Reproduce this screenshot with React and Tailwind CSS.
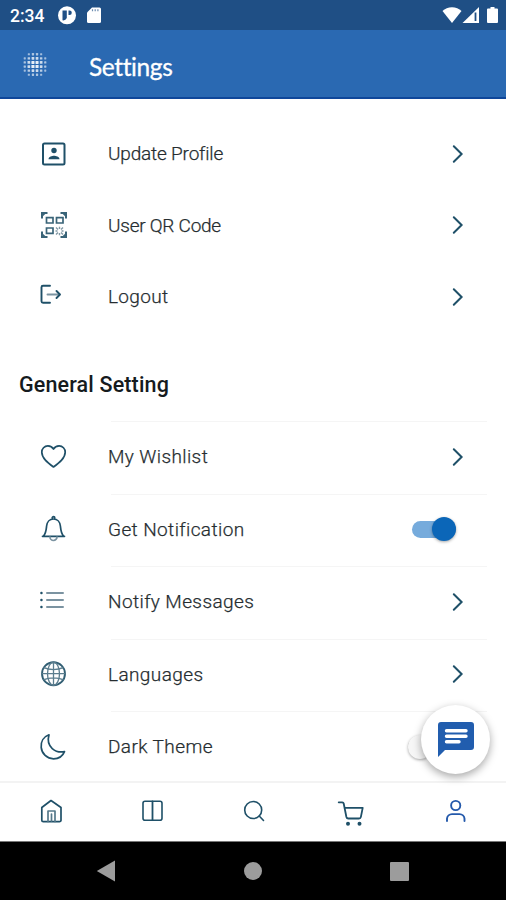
import { useState } from 'react';

const INK = '#1f5068';
const INK_SOFT = '#7b93a1';

function Glyph({ children, color = INK, size = 30, width = 1.7 }) {
  return (
    <svg
      width={size}
      height={size}
      viewBox={`0 0 ${size} ${size}`}
      fill="none"
      stroke={color}
      strokeWidth={width}
      strokeLinecap="round"
      strokeLinejoin="round"
      className="block shrink-0 overflow-visible"
    >
      {children}
    </svg>
  );
}

const ProfileIcon = () => (
  <Glyph width={2}>
    <rect x="4" y="4.5" width="21.5" height="21" rx="1.5" />
    <g fill={INK} stroke="none">
      <circle cx="15" cy="11.5" r="2.7" />
      <path d="M9.500 20.300c0-2.600 3.700-3.500 5.500-3.500s5.500.9 5.500 3.500z" />
    </g>
  </Glyph>
);

const QrIcon = () => (
  <Glyph width={1.7} color="#3a6478">
    <g strokeLinecap="butt" strokeLinejoin="miter">
      <path d="M3 8.500V3h5.500M21.500 3H27v5.500M27 21.500V27h-5.500M8.500 27H3v-5.500" strokeWidth="2" />
      <path d="M3 24v3h3zM24 27h3v-3zM3 6V3h3zM24 3h3v3z" />
      <path d="M7.500 7.700h6.500v5.300H7.500zM17.500 7.700H24v5.300h-6.500zM7.500 18H14v5.300H7.500z" />
      <path d="m17 17.500 2 2M20.500 16.800v2.200M24 17.500l-2 2M16.500 21h2M22.500 21h2M17 24.500l2-2M20.500 23v2.200M24 24.500l-2-2" stroke="#8299a5" strokeWidth="1.400" />
    </g>
  </Glyph>
);

const LogoutIcon = () => (
  <Glyph width={1.900}>
    <path d="M11 3.800H4A1.500 1.500 0 0 0 2.500 5.300v13.900A1.500 1.500 0 0 0 4 20.700h7" />
    <path d="M8.500 12.500H20" stroke={INK_SOFT} />
    <path d="m17.500 9 3.500 3.500-3.500 3.500" />
  </Glyph>
);

const HeartIcon = () => (
  <Glyph>
    <path d="M14.500 25C8.500 20.500 2.800 16 2.800 10.200a6.100 6.100 0 0 1 6.100-6.300c2.500 0 4.500 1.300 5.600 3.200 1.100-1.900 3.100-3.200 5.600-3.200a6.100 6.100 0 0 1 6.100 6.300c0 5.800-5.700 10.300-11.700 14.800z" />
  </Glyph>
);

const BellIcon = () => (
  <Glyph>
    <path d="M3.500 22.300h22M4.500 22c2.600-3 2.700-6 3.100-10 .4-4 3-7 6.900-7s6.500 3 6.900 7c.4 4 .5 7 3.100 10M13.200 4a1.300 1.300 0 0 1 2.600 0" />
    <path d="M11 23a3.500 3.500 0 0 0 7 0" stroke={INK_SOFT} />
  </Glyph>
);

const ListIcon = () => (
  <Glyph>
    <path d="M8 6h16M8 13h16M8 20h16" stroke={INK_SOFT} strokeWidth="2" />
    <path d="M2.400 6h.1M2.400 13h.1M2.400 20h.1" strokeWidth="2.400" />
  </Glyph>
);

const GlobeIcon = () => (
  <Glyph width={1.300} color="#5b7d8e">
    <circle cx="14.500" cy="14.700" r="11.500" strokeWidth="1.900" stroke="#315e73" />
    <ellipse cx="14.500" cy="14.700" rx="6" ry="11.500" />
    <path d="M14.500 3.200v23M3 14.700h23M5 8.700c5 2.500 14 2.500 19 0M5 20.700c5-2.500 14-2.500 19 0" />
  </Glyph>
);

const MoonIcon = () => (
  <Glyph>
    <path d="M10 2.800C4.500 4.800 1.700 9.800 2.200 15.300 2.800 21.800 8 26.800 14.500 26.800c4.800 0 9.200-2.800 11-7.200-8.500 1.700-19-4.300-15.500-16.800z" />
  </Glyph>
);

const HomeIcon = ({ color }) => (
  <Glyph color={color}>
    <path d="M5.800 10.500 15 3.500l10 7v12.700a1.500 1.500 0 0 1-1.500 1.500H7.300a1.500 1.500 0 0 1-1.500-1.500z" />
    <path d="M12 24.500V14h7v10.500M15.500 17v7" stroke="#56798a" />
  </Glyph>
);

const ColumnsIcon = ({ color }) => (
  <Glyph color={color} width={1.600}>
    <rect x="6" y="4.200" width="19" height="19" rx="2" />
    <path d="M15.500 4.500v18.500" strokeWidth="1.800" />
  </Glyph>
);

const SearchIcon = ({ color }) => (
  <Glyph color={color} width={1.600}>
    <circle cx="15.200" cy="13" r="8.500" />
    <path d="m21.200 19 4.300 4.500" />
  </Glyph>
);

const CartIcon = ({ color }) => (
  <Glyph color={color} width={1.800}>
    <path d="M-.3 5.300h3.500a1.500 1.500 0 0 1 1.500 1.200l2.700 13.500a2 2 0 0 0 2 1.500h10.500a2 2 0 0 0 2-1.600l1.800-9H5.500" />
    <circle cx="9" cy="26.700" r="1.100" fill={color} />
    <circle cx="20.500" cy="26.700" r="1.100" fill={color} />
  </Glyph>
);

const UserIcon = ({ color }) => (
  <Glyph color={color} width={1.900}>
    <circle cx="15.700" cy="8.500" r="4.600" />
    <path d="M7 24v-2.300a5 5 0 0 1 5-4.600h7.500a5 5 0 0 1 5 4.600V24" />
  </Glyph>
);

const Chevron = () => (
  <svg width="12" height="20" viewBox="0 0 12 20" fill="none" stroke={INK} strokeWidth="2" strokeLinecap="round" className="mr-[42px] block">
    <path d="m1.800 2.200 7.800 7.800-7.800 7.800" />
  </svg>
);

const accountItems = [
  { label: 'Update Profile', icon: ProfileIcon, tracking: 'tracking-[-0.18px]' },
  { label: 'User QR Code', icon: QrIcon, tracking: 'tracking-[-0.25px]' },
  { label: 'Logout', icon: LogoutIcon, tracking: 'tracking-[0.35px]' },
];

const generalItems = [
  { label: 'My Wishlist', icon: HeartIcon },
  { label: 'Get Notification', icon: BellIcon, toggle: 'notify' },
  { label: 'Notify Messages', icon: ListIcon },
  { label: 'Languages', icon: GlobeIcon },
  { label: 'Dark Theme', icon: MoonIcon, toggle: 'dark' },
];

const tabs = [HomeIcon, ColumnsIcon, SearchIcon, CartIcon, UserIcon];

function Toggle({ on, onClick }) {
  return (
    <button
      onClick={onClick}
      className={`mr-[50px] flex h-6 items-center ${on ? 'w-[44px] justify-end' : 'w-[48px] justify-start'}`}
    >
      <span className={`flex h-[17px] w-full items-center rounded-full ${on ? 'justify-end bg-[#76abdc]' : 'justify-start bg-[#c8c8c8]'}`}>
        <span className={`size-[24px] shrink-0 rounded-full shadow-[0_1px_3px_rgba(0,0,0,0.35)] ${on ? 'bg-[#0b66b8]' : 'bg-[#f6f6f6]'}`} />
      </span>
    </button>
  );
}

function Row({ item, children }) {
  const Icon = item.icon;
  return (
    <>
      <div className="flex w-[108px] pl-[39px]">
        <Icon />
      </div>
      <span className={`flex-1 pt-px text-[19px] font-light leading-6 text-[#262d30] [-webkit-text-stroke:0.25px_#262d30] ${item.tracking || 'tracking-[0.4px]'}`}>
        {item.label}
      </span>
      {children || <Chevron />}
    </>
  );
}

function StatusBar() {
  return (
    <div className="flex h-[30px] shrink-0 items-center bg-[#1f4f85] pl-[10px] pr-[8px] text-white">
      <span className="w-[47px] pt-[3px] text-[17.5px] font-medium leading-none">2:34</span>
      <svg width="20" height="20" viewBox="0 0 20 20" className="block">
        <circle cx="10" cy="10.300" r="9" fill="#fff" />
        <path d="M5.500 5.500h4.300v7.500a4 4 0 0 1-4.300 2.300zM11.500 5.500h1a2.300 2.300 0 0 1 0 4.600h-1z" fill="#1f4f85" />
      </svg>
      <svg width="16" height="18" viewBox="0 0 16 18" fill="#fff" className="ml-[9px] block">
        <path d="M6 1.500h7.500A1.500 1.500 0 0 1 15 3v12.500a1.500 1.500 0 0 1-1.500 1.500h-11A1.500 1.500 0 0 1 1 15.500V6.500z" />
        <path d="M6.500 3.200v2M9.200 3.200v2M11.900 3.200v2" stroke="#6c8cb0" strokeWidth="1.200" />
      </svg>
      <div className="flex-1" />
      <svg width="56" height="18" viewBox="0 0 56 18" fill="#fff" className="block">
        <path d="M.5 5C5-.1 15-.1 19.500 5L10 17z" />
        <path d="M37 1v16H20.500z" />
        <path d="M33.500 6.500v8.500" stroke="#1f4f85" strokeWidth="1.800" />
        <path d="M48.500 1h4v1.500H55a1 1 0 0 1 1 1V16a1 1 0 0 1-1 1h-9a1 1 0 0 1-1-1V3.500a1 1 0 0 1 1-1h2.500z" />
      </svg>
    </div>
  );
}

// 6x6 grid of dots that fades out to a round edge
function DotLogo() {
  const steps = [-2.5, -1.5, -0.5, 0.5, 1.5, 2.5];
  const dots = [];
  steps.forEach((r) => {
    steps.forEach((c) => {
      const d = Math.hypot(r, c);
      if (d < 3.2) dots.push({ x: 12 + c * 4.1, y: 12.5 + r * 4.1, s: 3.4 - d * 0.45, o: 1 - d * 0.15 });
    });
  });
  return (
    <svg width="24" height="24" viewBox="0 0 24 24" fill="#fff" className="block overflow-visible">
      {dots.map((p, i) => (
        <rect key={i} x={p.x - p.s / 2} y={p.y - p.s / 2} width={p.s} height={p.s} rx="0.4" opacity={p.o} />
      ))}
    </svg>
  );
}

export default function App() {
  const [toggles, setToggles] = useState({ notify: true, dark: false });
  const flip = (key) => setToggles((t) => ({ ...t, [key]: !t[key] }));

  return (
    <div className="relative flex h-[900px] w-[506px] flex-col overflow-hidden bg-white font-['Roboto',sans-serif]">
      <StatusBar />

      {/* HEADER */}
      <header className="flex h-[69px] shrink-0 items-center border-b-2 border-[#0f479a] bg-[#2a69b2] pl-[23px]">
        <DotLogo />
        <h1 className="ml-[42px] mt-[7px] font-['Lato',sans-serif] text-[24.5px] leading-none tracking-[-0.4px] text-white [-webkit-text-stroke:0.3px_white]">
          Settings
        </h1>
      </header>

      {/* LIST */}
      <main className="min-h-0 flex-1 overflow-hidden pt-[19px]">
        {accountItems.map((item) => (
          <div key={item.label} className="flex h-[71.5px] items-center">
            <Row item={item} />
          </div>
        ))}

        <h2 className="flex h-[88.5px] items-center pl-[19px] pt-[16px] text-[21.5px] font-medium leading-7 tracking-[0.15px] text-[#151b1e]">
          General Setting
        </h2>

        {generalItems.map((item) => (
          <div key={item.label} className="h-[72.5px]">
            <div className="ml-[111px] mr-[19px] h-px bg-[#f5f5f5]" />
            <div className="flex h-[69px] items-center">
              <Row item={item}>
                {item.toggle && <Toggle on={toggles[item.toggle]} onClick={() => flip(item.toggle)} />}
              </Row>
            </div>
          </div>
        ))}
      </main>

      {/* TABS */}
      <nav className="grid h-[60px] shrink-0 grid-cols-5 border-t-2 border-[#f3f3f3] bg-white">
        {tabs.map((Icon, i) => (
          <button key={i} className="flex items-center justify-center">
            <Icon color={i === 4 ? '#2459ab' : INK} />
          </button>
        ))}
      </nav>

      {/* SYSTEM BAR */}
      <div className="flex h-[59px] shrink-0 items-center justify-between border-t border-[#777] bg-black pl-[96px] pr-[97px]">
        <svg width="20" height="22" viewBox="0 0 20 22" fill="#9c9c9c">
          <path d="M19 .5v21L.8 11z" />
        </svg>
        <span className="size-[18px] rounded-full bg-[#9c9c9c]" />
        <span className="size-[19px] rounded-[1px] bg-[#9c9c9c]" />
      </div>

      {/* CHAT BUTTON */}
      <button className="absolute left-[421px] top-[705px] flex size-[69px] items-center justify-center rounded-full bg-white shadow-[0_3px_8px_rgba(0,0,0,0.35)]">
        <svg width="36" height="36" viewBox="0 0 36 36" className="block">
          <path d="M3 0h30a3 3 0 0 1 3 3v22a3 3 0 0 1-3 3H7l-7 7V3a3 3 0 0 1 3-3z" fill="#215dae" />
          <path d="M8.500 8.700h19.500M8.500 14.200h19.500M8.500 19.700h12.500" stroke="#fff" strokeWidth="3.400" strokeLinecap="round" />
        </svg>
      </button>
    </div>
  );
}
